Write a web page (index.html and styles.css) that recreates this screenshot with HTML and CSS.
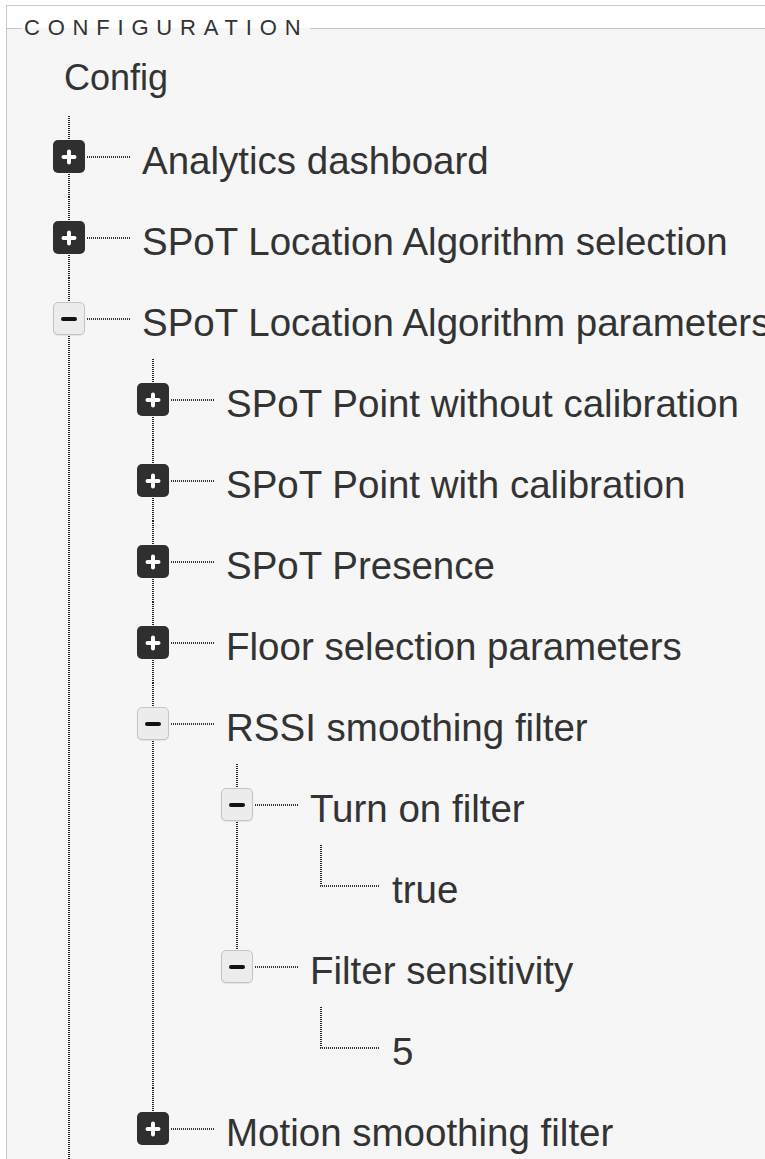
FILE: index.html
```html
<!DOCTYPE html>
<html lang="en">
<head>
    <meta charset="UTF-8">
    <meta name="viewport" content="width=device-width, initial-scale=1.0">
    <title>Configuration</title>
    <link rel="stylesheet" href="styles.css">
</head>
<body>
    <div class="panel">
        <fieldset class="config">
            <legend>CONFIGURATION</legend>
            <div class="tree-root">Config</div>
            <ul class="tree tree-top">
                <li>
                    <div class="node">
                        <span class="toggle closed"><svg width="16" height="16" viewBox="0 0 16 16"><path d="M8 2.5v11M2.5 8h11" stroke="#fff" stroke-width="4" stroke-linecap="round"/></svg></span>
                        <span class="link"></span>
                        <span class="label">Analytics dashboard</span>
                    </div>
                </li>
                <li>
                    <div class="node">
                        <span class="toggle closed"><svg width="16" height="16" viewBox="0 0 16 16"><path d="M8 2.5v11M2.5 8h11" stroke="#fff" stroke-width="4" stroke-linecap="round"/></svg></span>
                        <span class="link"></span>
                        <span class="label">SPoT Location Algorithm selection</span>
                    </div>
                </li>
                <li>
                    <div class="node">
                        <span class="toggle open"><svg width="16" height="16" viewBox="0 0 16 16"><path d="M2 8h12" stroke="#111" stroke-width="4" stroke-linecap="round"/></svg></span>
                        <span class="link"></span>
                        <span class="label">SPoT Location Algorithm parameters</span>
                    </div>
                    <ul class="tree">
                        <li>
                            <div class="node">
                                <span class="toggle closed"><svg width="16" height="16" viewBox="0 0 16 16"><path d="M8 2.5v11M2.5 8h11" stroke="#fff" stroke-width="4" stroke-linecap="round"/></svg></span>
                                <span class="link"></span>
                                <span class="label">SPoT Point without calibration</span>
                            </div>
                        </li>
                        <li>
                            <div class="node">
                                <span class="toggle closed"><svg width="16" height="16" viewBox="0 0 16 16"><path d="M8 2.5v11M2.5 8h11" stroke="#fff" stroke-width="4" stroke-linecap="round"/></svg></span>
                                <span class="link"></span>
                                <span class="label">SPoT Point with calibration</span>
                            </div>
                        </li>
                        <li>
                            <div class="node">
                                <span class="toggle closed"><svg width="16" height="16" viewBox="0 0 16 16"><path d="M8 2.5v11M2.5 8h11" stroke="#fff" stroke-width="4" stroke-linecap="round"/></svg></span>
                                <span class="link"></span>
                                <span class="label">SPoT Presence</span>
                            </div>
                        </li>
                        <li>
                            <div class="node">
                                <span class="toggle closed"><svg width="16" height="16" viewBox="0 0 16 16"><path d="M8 2.5v11M2.5 8h11" stroke="#fff" stroke-width="4" stroke-linecap="round"/></svg></span>
                                <span class="link"></span>
                                <span class="label">Floor selection parameters</span>
                            </div>
                        </li>
                        <li>
                            <div class="node">
                                <span class="toggle open"><svg width="16" height="16" viewBox="0 0 16 16"><path d="M2 8h12" stroke="#111" stroke-width="4" stroke-linecap="round"/></svg></span>
                                <span class="link"></span>
                                <span class="label">RSSI smoothing filter</span>
                            </div>
                            <ul class="tree">
                                <li>
                                    <div class="node">
                                        <span class="toggle open"><svg width="16" height="16" viewBox="0 0 16 16"><path d="M2 8h12" stroke="#111" stroke-width="4" stroke-linecap="round"/></svg></span>
                                        <span class="link"></span>
                                        <span class="label">Turn on filter</span>
                                    </div>
                                    <ul class="tree">
                                        <li class="last">
                                            <div class="node leaf">
                                                <span class="link"></span>
                                                <span class="label">true</span>
                                            </div>
                                        </li>
                                    </ul>
                                </li>
                                <li class="last">
                                    <div class="node">
                                        <span class="toggle open"><svg width="16" height="16" viewBox="0 0 16 16"><path d="M2 8h12" stroke="#111" stroke-width="4" stroke-linecap="round"/></svg></span>
                                        <span class="link"></span>
                                        <span class="label">Filter sensitivity</span>
                                    </div>
                                    <ul class="tree">
                                        <li class="last">
                                            <div class="node leaf">
                                                <span class="link"></span>
                                                <span class="label">5</span>
                                            </div>
                                        </li>
                                    </ul>
                                </li>
                            </ul>
                        </li>
                        <li class="last">
                            <div class="node">
                                <span class="toggle closed"><svg width="16" height="16" viewBox="0 0 16 16"><path d="M8 2.5v11M2.5 8h11" stroke="#fff" stroke-width="4" stroke-linecap="round"/></svg></span>
                                <span class="link"></span>
                                <span class="label">Motion smoothing filter</span>
                            </div>
                        </li>
                    </ul>
                </li>
            </ul>
        </fieldset>
    </div>
</body>
</html>
```

FILE: styles.css
```css
body {
    margin: 0;
    background-color: #fff;
    font-family: "Liberation Sans", Arial, Helvetica, sans-serif;
    color: #333;
    overflow: hidden;
}

.panel {
    margin: 5px 0 0 6px;
    border-top: 1px solid #c8c8c8;
    border-left: 1px solid #c8c8c8;
}

.config {
    margin: 11px 0 0;
    padding: 0 0 40px;
    min-width: 0;
    border: 0;
    border-top: 1px solid #c4c4c4;
    background-color: #f6f6f6;
}

    .config legend {
        margin-left: 15px;
        padding: 0 2px;
        font-size: 22px;
        line-height: 22px;
        letter-spacing: 7.8px;
        color: #333;
    }

.tree-root {
    display: flex;
    align-items: center;
    height: 77px;
    padding-left: 57px;
    font-size: 36px;
}

.tree {
    list-style: none;
    margin: 0;
    padding: 0 0 0 84px;
}

.tree-top {
    padding-left: 46px;
}

    /* dotted guide line running down beside the siblings */
    .tree li {
        background-image: repeating-linear-gradient(to bottom, #262626 0 1px, transparent 1px 2px);
        background-size: 2px 100%;
        background-position: 15px 0;
        background-repeat: no-repeat;
    }

        .tree li.last {
            background: none;
        }

            .tree li.last > .node {
                background-image: repeating-linear-gradient(to bottom, #262626 0 1px, transparent 1px 2px);
                background-size: 2px 50%;
                background-position: 15px 0;
                background-repeat: no-repeat;
            }

.node {
    display: flex;
    align-items: center;
    height: 81px;
    white-space: nowrap;
}

.toggle {
    flex: none;
    display: flex;
    align-items: center;
    justify-content: center;
    box-sizing: border-box;
    width: 32px;
    height: 33px;
    border-radius: 5px;
}

    .toggle.closed {
        background-color: #2f2f2f;
    }

    .toggle.open {
        background-color: #ececec;
        border: 1px solid #c4c4c4;
        box-shadow: 0 1px 1px rgba(0, 0, 0, 0.08);
    }

.link {
    flex: none;
    width: 43px;
    height: 2px;
    margin-left: 2px;
    background-image: repeating-linear-gradient(to right, #333 0 1px, transparent 1px 2px);
}

.leaf .link {
    width: 60px;
    margin-left: 15px;
}

.label {
    margin-left: 12px;
    padding-top: 8px;
    font-size: 38.5px;
}
```
